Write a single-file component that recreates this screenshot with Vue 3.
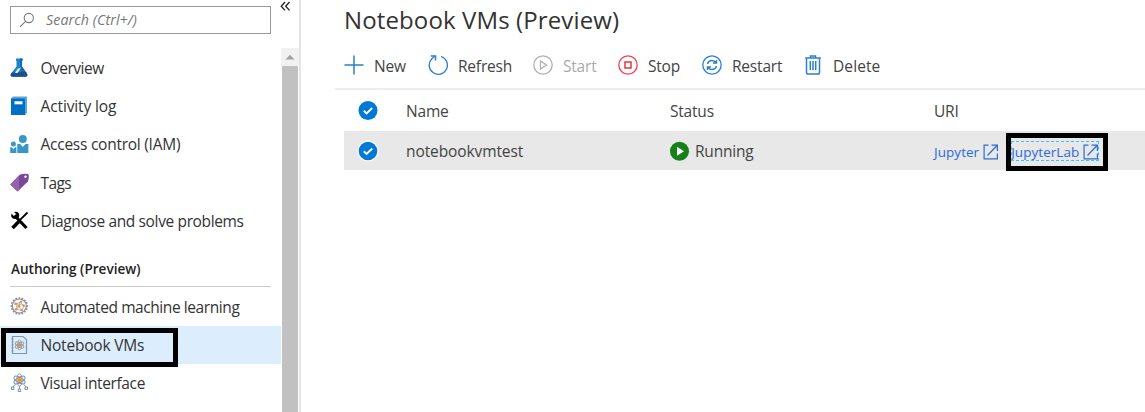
<script setup>
const general = [
  { id: 'overview', label: 'Overview' },
  { id: 'log', label: 'Activity log' },
  { id: 'iam', label: 'Access control (IAM)' },
  { id: 'tags', label: 'Tags' },
  { id: 'diagnose', label: 'Diagnose and solve problems' },
]
const authoring = [
  { id: 'automl', label: 'Automated machine learning' },
  { id: 'notebook', label: 'Notebook VMs', selected: true },
  { id: 'visual', label: 'Visual interface' },
]
const commands = [
  { id: 'new', label: 'New' },
  { id: 'refresh', label: 'Refresh' },
  { id: 'start', label: 'Start', disabled: true },
  { id: 'stop', label: 'Stop' },
  { id: 'restart', label: 'Restart' },
  { id: 'delete', label: 'Delete' },
]
const teeth = Array.from({ length: 16 }, (_, i) => i * 22.5)
</script>

<template>
  <div class="app">
    <aside class="side">
      <div class="top">
        <div class="search">
          <svg width="16" height="16" viewBox="0 0 16 16" fill="none" stroke="#777" stroke-width="1.1"><circle cx="9.8" cy="6" r="4.6" /><path d="M6.5 9.3 1 14.8" /></svg>
          <span>Search (Ctrl+/)</span>
        </div>
        <svg class="collapse" width="11" height="11" viewBox="0 0 11 11" fill="none" stroke="#222" stroke-width="1.3"><path d="M5 1 1.2 5.2 5 9.4M9.5 1 5.7 5.2l3.8 4.2" /></svg>
      </div>
      <div class="body">
        <nav class="nav">
          <div v-for="n in general" :key="n.id" class="item">
            <svg v-if="n.id === 'overview'" width="20" height="20" viewBox="0 0 20 20">
              <path d="M6 .5h6.500v2.300H12v5.700l5 7.200q1.200 3-1.500 3h-13q-2.700 0-1.500-3l5.500-7.200V2.800H6z" fill="#1a86c8" />
              <path d="M10 .5h2.500v2.300H12v5.700l5 7.200h-6z" fill="#1768a8" />
              <path d="M1.800 14.500 16 14l1 1.700q1.200 3-1.500 3h-13q-2.700 0-1.500-3z" fill="#1d4f8d" />
              <path d="m7.500 11 3.500-1.500L7.500 15H5z" fill="#e8f4fb" />
            </svg>
            <svg v-else-if="n.id === 'log'" width="20" height="20" viewBox="0 0 20 20">
              <path d="M3 .5h14v16.500l-2 2H1V2.500z" fill="#5da7df" /><path d="M1 2.500h14V19H1z" fill="#0070c6" /><path d="M4.500 5.300h8v3h-8z" fill="#fff" />
            </svg>
            <svg v-else-if="n.id === 'iam'" width="20" height="20" viewBox="0 0 20 20" fill="#3797c8">
              <circle cx="12.800" cy="4.900" r="4" /><circle cx="3.400" cy="10.100" r="2.500" />
              <path d="M7.300 10h2.800l2.700 3 2.700-3h2.900v9H7.300zM.2 13.200h1.500l1.700 1.700 1.700-1.700h1.300V19H.2z" />
            </svg>
            <svg v-else-if="n.id === 'tags'" width="20" height="20" viewBox="0 0 20 20">
              <path d="M.3 11.500 10 1.500q4-1.300 8-.5l.7 1q.6 3-.8 6.500L7.500 18.500z" fill="#7b459b" /><path d="M.3 11.500 9 2.500V17l-1.500 1.500z" fill="#9662ac" /><circle cx="15.500" cy="3.800" r="1.200" fill="#fff" />
            </svg>
            <svg v-else width="20" height="20" viewBox="0 0 20 20" fill="none" stroke="#000">
              <path d="m4.500 4.500 12 12.500" stroke-width="3.200" /><path d="M1.500 2.500 4 5.300 6.400 3.300 4 1q4.500-1 5.300 2.900 0 4.400-4.500 4.200Q.2 7.200 1.500 2.500z" fill="#000" stroke="none" /><path d="M17.500 1.500 9.500 9.300" stroke-width="1.800" /><path d="m8.700 10.700-6.200 6.300" stroke-width="3.500" />
            </svg>
            <span :class="'t-' + n.id">{{ n.label }}</span>
          </div>
          <h2 class="section"><span>Authoring (Preview)</span></h2>
          <div v-for="n in authoring" :key="n.id" class="item" :class="{ selected: n.selected }">
            <svg v-if="n.id === 'automl'" width="20" height="20" viewBox="0 0 20 20" fill="none">
              <g stroke="#8492a5" stroke-width="1.200"><circle cx="9.300" cy="9" r="7" /><path v-for="a in teeth" :key="a" :transform="`rotate(${a} 9.300 9)`" d="M9.300 1.800V.3" stroke-width="1.800" /><path d="m6 6.500 4-1 4 3-2 5-5-1zM6 6.500l6 7M10 5.500l-3 7m7-4-8-2" stroke-width=".6" /></g>
              <g fill="#f5902c"><circle cx="5.500" cy="6.800" r="1.300" /><circle cx="11" cy="4.800" r="1.300" /><circle cx="13.700" cy="8.700" r="1.300" /><circle cx="9" cy="9.300" r="1.300" /><circle cx="6" cy="12.300" r="1.300" /><circle cx="11.700" cy="13" r="1.300" /></g>
            </svg>
            <svg v-else-if="n.id === 'notebook'" width="20" height="20" viewBox="0 0 20 20" fill="none" stroke="#8494a7">
              <path d="M2.500 1.500H13l3.500 3v14h-14z" stroke-width="1.200" /><path d="M1.500 4h2M1.500 7h2M1.500 10h2M1.500 13h2M1.500 16h2" />
              <g stroke-width=".8"><ellipse cx="9.500" cy="10" rx="2" ry="5" /><ellipse cx="9.500" cy="10" rx="2" ry="5" transform="rotate(60 9.500 10)" /><ellipse cx="9.500" cy="10" rx="2" ry="5" transform="rotate(120 9.500 10)" /></g><circle cx="9.500" cy="10" r="1.700" fill="#f78d1d" stroke="none" />
            </svg>
            <svg v-else width="20" height="20" viewBox="0 0 20 20" fill="none" stroke="#8090a4">
              <ellipse cx="9.500" cy="7" rx="2.600" ry="6.200" /><ellipse cx="9.500" cy="7" rx="2.600" ry="6.200" transform="rotate(60 9.500 7)" /><ellipse cx="9.500" cy="7" rx="2.600" ry="6.200" transform="rotate(120 9.500 7)" />
              <path d="M9.500 13v3M5 11.500l-2 2.500M14 11.500l2 2.500M1.500 14H4v2.500H1.500zM8.200 16h2.500v2.500H8.200zM15 14h2.500v2.500H15z" /><circle cx="9.500" cy="7" r="2" fill="#ff8a17" stroke="none" />
            </svg>
            <span :class="'t-' + n.id">{{ n.label }}</span>
            <i v-if="n.selected" class="callout"></i>
          </div>
        </nav>
        <div class="scroll">
          <div class="up"><svg width="10" height="6" viewBox="0 0 10 6"><path d="M.5 5.500h9L5 .7z" fill="#a1a1a1" /></svg></div>
          <div class="thumb"></div>
        </div>
      </div>
    </aside>

    <main class="main">
      <h1><span>Notebook VMs (Preview)</span></h1>
      <div class="bar">
        <div v-for="c in commands" :key="c.id" class="cmd" :class="['c-' + c.id, { disabled: c.disabled }]">
          <svg width="20" height="20" viewBox="0 0 20 20" fill="none" stroke="#2b7fcd" stroke-width="1.300">
            <path v-if="c.id === 'new'" d="M10 .5v19M.5 10h19" stroke-width="1.500" />
            <template v-else-if="c.id === 'refresh'"><path d="M13 1.500A9.100 9.100 0 1 1 3.800 3.800L7.200 1" /><path d="M2.800 1h4.700v4.500" stroke-width="1.500" /></template>
            <template v-else-if="c.id === 'start'"><circle cx="10" cy="10" r="9.200" stroke="#b1b1b1" /><path d="M7.500 6v8l6-4z" stroke="#b1b1b1" /></template>
            <template v-else-if="c.id === 'stop'"><circle cx="10" cy="10" r="9.200" stroke="#ee4357" /><path d="M7 7h6v6H7z" stroke="#e83247" stroke-width="1.500" /></template>
            <template v-else-if="c.id === 'restart'"><circle cx="10" cy="10" r="9.200" /><path d="M5.500 9q1-3.500 4.500-3.500 2.500 0 4 2.200M14.500 5v3H11M14.500 11q-1 3.500-4.500 3.500-2.500 0-4-2.200M5.500 15v-3H9" stroke-width="1.500" /></template>
            <template v-else><path d="M3.500 3.500v13.700q0 1.800 1.800 1.800h9.400q1.800 0 1.800-1.800V3.500" stroke-width="1.500" /><path d="M2.200 3h15.600M7.500 3V1h5v2M7.300 6v9M10 6v9M12.700 6v9" stroke-width="1.500" /></template>
          </svg>
          <span>{{ c.label }}</span>
        </div>
      </div>
      <div class="row head">
        <svg class="check" width="22" height="22" viewBox="0 0 22 22"><circle cx="11" cy="10.500" r="9.500" fill="#0078d7" /><path d="m6.800 10.700 2.800 2.700 5.600-5.400" fill="none" stroke="#fff" stroke-width="1.900" /></svg>
        <span>Name</span><span>Status</span><span>URI</span>
      </div>
      <div class="row data">
        <svg class="check" width="22" height="22" viewBox="0 0 22 22"><circle cx="11" cy="11" r="10.500" fill="#fff" /><circle cx="11" cy="11" r="9.300" fill="#0078d7" /><path d="m6.800 11.200 2.800 2.700 5.600-5.400" fill="none" stroke="#fff" stroke-width="1.900" /></svg>
        <span class="vm">notebookvmtest</span>
        <span class="status"><svg width="20" height="20" viewBox="0 0 20 20"><circle cx="9.500" cy="10.200" r="9.500" fill="#178017" /><path d="M7 5.700v9l7-4.500z" fill="#fff" /></svg><b>Running</b></span>
        <span class="links">
          <a class="jup"><b>Jupyter</b><svg width="16" height="16" viewBox="0 0 16 16" fill="none" stroke="#2b6bdc" stroke-width="1.200"><path d="M5.500 1.100H1.100v13.800h13.300V9.500M4.500 11.500 14 1.500M8.500 1.100h5.900V7" /></svg></a>
          <a class="lab"><b>JupyterLab</b><svg width="16" height="16" viewBox="0 0 16 16" fill="none" stroke="#2b6bdc" stroke-width="1.200"><path d="M5.500 1.100H1.100v13.800h13.300V9.500M4.500 11.500 14 1.500M8.500 1.100h5.900V7" /></svg><i class="focus"></i><i class="callout2"></i></a>
        </span>
      </div>
    </main>
  </div>
</template>

<style>
body { margin: 0; background: #fff; overflow: hidden; }
</style>

<style scoped>
* { box-sizing: border-box; }
.app { display: flex; width: 1145px; height: 412px; overflow: hidden; font: 15.500px/22px "Open Sans", "Noto Sans", sans-serif; color: #333; letter-spacing: -.2px; background: #fff; }
span, b { white-space: nowrap; font-weight: 400; }
svg { flex: none; display: block; }
.side { width: 301px; border-right: 2px solid #e4e4e4; display: flex; flex-direction: column; flex: none; }
.top { height: 48px; display: flex; padding: 6px 0 0 10px; flex: none; }
.search { width: 261px; height: 28px; border: 1px solid #999; display: flex; align-items: center; padding-left: 8px; color: #777; font-style: italic; font-size: 14.200px; letter-spacing: .1px; }
.search svg { margin-right: 11px; }
.collapse { margin: -5px 0 0 9px; }
.body { display: flex; flex: 1; min-height: 0; }
.nav { width: 281px; flex: none; padding-top: 1px; }
.item { height: 38.200px; display: flex; align-items: center; padding-left: 10px; position: relative; }
.item span { margin-left: 10.500px; }
.t-overview { letter-spacing: -.5px; }
.t-log { letter-spacing: -.12px; }
.t-iam { letter-spacing: -.25px; }
.t-tags { letter-spacing: -.6px; }
.t-diagnose { letter-spacing: -.36px; }
.t-automl { letter-spacing: -.42px; }
.t-visual { letter-spacing: -.38px; }
.selected { background: #dceefe; }
.section { margin: 0 0 1px 10px; height: 47px; border-bottom: 1px solid #c8c8c8; padding: 18px 0 0 1px; font-size: 13.500px; line-height: 22px; color: #222; width: 261px; letter-spacing: .03px; }
.section span { font-weight: 600; }
.callout { position: absolute; left: 1px; top: 2px; width: 177px; height: 39px; border: 5px solid #000; z-index: 2; }
.scroll { width: 18px; display: flex; flex-direction: column; }
.up { height: 18px; background: #f1f1f1; display: flex; align-items: center; justify-content: center; }
.thumb { flex: 1; background: #c1c1c1; margin: 0 1px; }
.main { flex: 1; padding-left: 34px; min-width: 0; }
h1 { margin: 0; padding-left: 9px; height: 44px; line-height: 40px; font-size: 24px; font-weight: 400; letter-spacing: .12px; }
.bar { height: 46px; border-bottom: 2px solid #ededed; display: flex; padding-left: 9px; align-items: center; }
.cmd { display: flex; align-items: center; gap: 10px; height: 44px; color: #444; flex: none; }
.cmd svg { margin-top: -2px; }
.c-new { width: 84px; }
.c-refresh { width: 105px; }
.c-start { width: 85px; }
.c-stop { width: 84px; }
.c-restart { width: 101px; }
.c-delete { letter-spacing: .1px; }
.disabled { color: #aaa; }
.row { display: grid; grid-template-columns: 62px 264px 264px 1fr; align-items: center; margin-left: 9px; color: #444; }
.head { height: 41px; }
.data { height: 39px; background: #e8e8e8; }
.check { margin-left: 13px; }
.vm { letter-spacing: -.1px; }
.status, .links, .links a { display: flex; align-items: center; }
.status b { margin-left: 5px; }
.links { font-size: 13.500px; letter-spacing: .05px; color: #2b6bdc; padding-top: 2px; }
.links a { position: relative; }
.links svg { margin-left: 4px; }
.lab { margin-left: 12px; height: 19px; }
.focus { position: absolute; left: 0; top: -1px; width: 88px; height: 20px; border: 1.500px dashed #35c8f2; }
.callout2 { position: absolute; left: -5px; top: -9px; width: 102px; height: 38px; border: 5px solid #000; }
</style>
